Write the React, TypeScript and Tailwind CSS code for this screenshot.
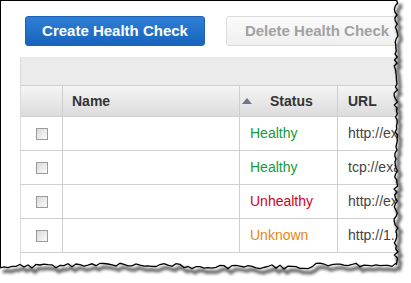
import React from 'react';

// small seeded random so the torn edge stays the same on every render
const seeded = (s: number) => () => {
  s = (s * 9301 + 49297) % 233280;
  return s / 233280;
};

const TornEdge = () => {
  const rnd = seeded(11);
  const pts: string[] = [];
  for (let y = 0; y <= 266; y += 3) {
    pts.push(`${(395 + rnd() * 4 - 1).toFixed(1)},${y}`);
  }
  for (let x = 396; x >= -2; x -= 4) {
    const bump = x > 180 && x < 310 ? 2 : x < 60 ? 1 : 0;
    pts.push(`${x},${(265 + bump + rnd() * 4 - 2).toFixed(1)}`);
  }
  const edge = 'M' + pts.join(' L');
  return (
    <svg className="absolute inset-0 pointer-events-none" width="411" height="283" viewBox="0 0 411 283">
      <defs>
        <filter id="blur" x="-10%" y="-10%" width="120%" height="120%">
          <feGaussianBlur stdDeviation="1.4" />
        </filter>
      </defs>
      <path d={edge + ' L-2,283 L411,283 L411,0 Z'} fill="#fff" />
      <path d={edge} fill="none" stroke="#444" strokeWidth="3.5" transform="translate(3,4)" filter="url(#blur)" opacity="0.85" />
      <path d={edge} fill="none" stroke="#000" strokeWidth="1.3" />
    </svg>
  );
};

const Checkbox = () => (
  <div className="w-[12px] h-[12px] border border-[#9a9a9a] bg-gradient-to-br from-[#d8dadd] to-[#fbfbfb]" />
);

const rows = [
  { status: 'Healthy', color: 'text-[#17993a]', url: 'http://example.com/health' },
  { status: 'Healthy', color: 'text-[#17993a]', url: 'tcp://example.com:80' },
  { status: 'Unhealthy', color: 'text-[#d2001e]', url: 'http://example.org/ping' },
  { status: 'Unknown', color: 'text-[#e8870c]', url: 'http://1.2.3.4/' },
];

const App: React.FC = () => {
  return (
    <div className="relative w-[411px] h-[283px] overflow-hidden bg-white" style={{ fontFamily: '"Liberation Sans", Arial, sans-serif' }}>
      <div className="h-full border-l border-t border-black pt-[15px]">
        {/* buttons */}
        <div className="flex gap-[21px] pl-[24px] whitespace-nowrap">
          <button className="w-[180px] h-[30px] shrink-0 rounded-[3px] border border-[#1d62b5] bg-gradient-to-b from-[#2f7fd6] to-[#1763bd] text-white font-bold text-[15px]">
            Create Health Check
          </button>
          <button className="w-[182px] h-[30px] shrink-0 rounded-[3px] border border-[#dcdcdc] bg-gradient-to-b from-[#fbfbfb] to-[#efefef] text-[#a2a2a2] font-bold text-[15px]">
            Delete Health Check
          </button>
        </div>

        {/* table */}
        <div className="ml-[19px] mt-[11px] w-[460px] h-[300px] border-l border-[#d9d9d9]">
          <div className="h-[28px] bg-[#ebebeb]" />
          <div className="flex h-[32px] border-y border-[#cfcfcf] bg-gradient-to-b from-[#f5f5f5] to-[#dcdcdc] text-[14px] font-bold text-[#333]">
            <div className="w-[42px] shrink-0 border-r border-[#cfcfcf]" />
            <div className="w-[177px] shrink-0 border-r border-[#cfcfcf] flex items-center pl-[9px]">Name</div>
            <div className="w-[98px] shrink-0 border-r border-[#cfcfcf] flex items-center pl-[2px]">
              <svg width="10" height="6" viewBox="0 0 10 6">
                <path d="M5 0 L10 6 L0 6 Z" fill="#6f7782" />
              </svg>
              <span className="ml-[18px]">Status</span>
            </div>
            <div className="flex-1 min-w-0 flex items-center pl-[10px]">URL</div>
          </div>
          {rows.map((r, i) => (
            <div key={i} className="flex h-[34px] border-b border-[#cfcfcf] text-[14px] whitespace-nowrap">
              <div className="w-[42px] shrink-0 border-r border-[#cfcfcf] flex items-center pl-[15px] pt-[1px]">
                <Checkbox />
              </div>
              <div className="w-[177px] shrink-0 border-r border-[#cfcfcf]" />
              <div className={`w-[98px] shrink-0 border-r border-[#cfcfcf] flex items-center pl-[10px] ${r.color}`}>{r.status}</div>
              <div className="flex-1 min-w-0 overflow-hidden flex items-center pl-[10px] text-[#444]">{r.url}</div>
            </div>
          ))}
        </div>
      </div>
      <TornEdge />
    </div>
  );
};

export default App;
